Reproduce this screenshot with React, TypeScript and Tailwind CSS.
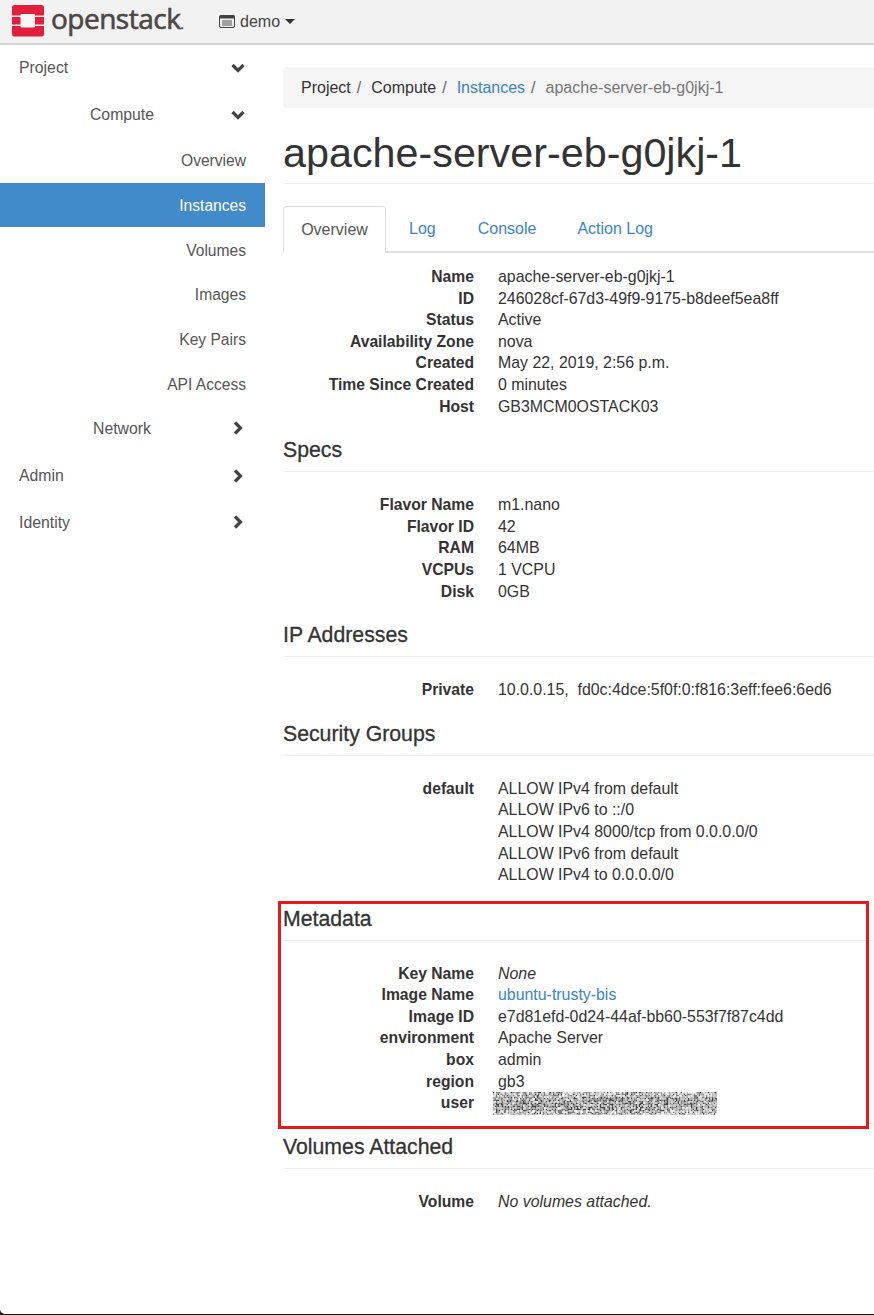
import React from 'react';

const font = "[font-family:'Liberation_Sans',Arial,sans-serif]";

type Row = [string, React.ReactNode];

function Rows({ rows }: { rows: Row[] }) {
	return (
		<dl className="grid grid-cols-[191px_1fr] gap-x-6 text-[15.9px] leading-[21.6px]">
			{rows.map(([label, value], i) => (
				<React.Fragment key={i}>
					<dt className="text-right text-[15.7px] font-bold text-[#333]">{label}</dt>
					<dd className="text-[#333] whitespace-pre">{value}</dd>
				</React.Fragment>
			))}
		</dl>
	);
}

function Section({ title, rows, children }: { title: string; rows?: Row[]; children?: React.ReactNode }) {
	return (
		<section className="relative mt-5">
			<h3 className="border-b border-[#eee] pb-2 mb-[22px] text-[21.25px] leading-[26px] font-normal text-[#333] [-webkit-text-stroke:0.3px_#333]">{title}</h3>
			{rows && <Rows rows={rows} />}
			{children}
		</section>
	);
}

function Chevron({ dir }: { dir: 'down' | 'right' }) {
	return (
		<svg width="14" height="14" viewBox="0 0 14 14" fill="none" stroke="#444" strokeWidth="3.2" className="shrink-0">
			{dir === 'down' ? <path d="M1.5 4 7 9.5 12.5 4" /> : <path d="M4 1.5 9.5 7 4 12.5" />}
		</svg>
	);
}

function Group({ label, dir, nested, raised }: { label: string; dir: 'down' | 'right'; nested?: boolean; raised?: boolean }) {
	return (
		<div className={raised
			? 'flex h-[46.5px] items-center pb-[2px] text-[15.8px] text-[#555]'
			: 'flex h-[46.5px] items-center text-[15.8px] text-[#555]'}>
			{nested ? (
				<span className="w-[208px] ml-[18px] text-center">{label}</span>
			) : (
				<span className="w-[208px] ml-[19px] -mr-px">{label}</span>
			)}
			<span className="ml-[5px]"><Chevron dir={dir} /></span>
		</div>
	);
}

function SideItem({ label, active }: { label: string; active?: boolean }) {
	return (
		<div className={active
			? 'flex h-[44.7px] items-center justify-end pt-[1px] pr-[19px] text-[15.6px] bg-[#428bca] text-white'
			: 'flex h-[44.7px] items-center justify-end pt-[1px] pr-[19px] text-[15.6px] text-[#555]'}>
			{label}
		</div>
	);
}

// redacted text block: seeded grey speckle over a darker band
function Noise() {
	const w = 224;
	const h = 23;
	const cell = 1.5;
	const levels = ['#444', '#808080', '#aaa', '#ccc', '#f0f0f0'];
	const paths: string[] = levels.map(() => '');
	let seed = 1337;
	const rnd = () => {
		seed = (seed * 16807) % 2147483647;
		return seed / 2147483647;
	};
	for (let y = 0; y < h; y += cell) {
		for (let x = 0; x < w; x += cell) {
			const band = Math.abs(y - h / 2) < 6 ? 0.14 : 0;
			const idx = Math.min(4, Math.max(0, Math.floor((rnd() + 0.12 - band) * 4.4)));
			paths[idx] += `M${x} ${y}h${cell}v${cell}h-${cell}z`;
		}
	}
	return (
		<svg width={w} height={h} viewBox={`0 0 ${w} ${h}`} className="block">
			{paths.map((d, i) => <path key={i} d={d} fill={levels[i]} />)}
		</svg>
	);
}

export default function App() {
	return (
		<div className={`${font} w-[874px] h-[1315px] overflow-hidden bg-[#1c1c1c] pb-px text-[#333]`}>
			<div className="h-full overflow-hidden rounded-bl-[5px] bg-white">
				<header className="flex h-[45px] items-center border-b-2 border-[#d4d4d4] bg-[#f2f2f2]">
					<svg width="32" height="32" viewBox="0 0 32 32" className="ml-3 -mt-0.5 shrink-0">
						<rect width="32" height="31.5" rx="2.5" fill="#e01f3d" />
						<rect x="8.5" y="9" width="14.5" height="13.5" rx="1" fill="#f7f7f7" />
						<rect x="0" y="10.5" width="9" height="1.5" fill="#fbe4e7" />
						<rect x="0" y="19.5" width="9" height="1.5" fill="#fbe4e7" />
						<rect x="23" y="10.5" width="9" height="1.5" fill="#fbe4e7" />
						<rect x="23" y="19.5" width="9" height="1.5" fill="#fbe4e7" />
					</svg>
					<span className="ml-[7px] -mt-2 w-[137px] whitespace-nowrap text-[28px] leading-none tracking-[-0.5px] text-[#4b4745] [-webkit-text-stroke:0.6px_#4b4745] [font-family:'Open_Sans',sans-serif]">openstack<span className="text-[12px]">.</span></span>
					<svg width="16" height="13" viewBox="0 0 16 13" className="ml-[31px] shrink-0">
						<rect x="0.5" y="0.5" width="15" height="12" rx="1.5" fill="#eee" stroke="#444" />
						<rect x="0.5" y="0.5" width="15" height="3" fill="#444" />
						<path d="M3 6h10M3 8h10M3 10h10" stroke="#555" />
					</svg>
					<span className="ml-[5px] text-[16px] text-[#444]">demo</span>
					<span className="ml-[5px] h-0 w-0 border-x-[5px] border-t-[5px] border-x-transparent border-t-[#333]" />
				</header>
				<div className="flex">
					<nav className="w-[265px] shrink-0">
						<Group label="Project" dir="down" />
						<Group label="Compute" dir="down" nested />
						<SideItem label="Overview" />
						<SideItem label="Instances" active />
						<SideItem label="Volumes" />
						<SideItem label="Images" />
						<SideItem label="Key Pairs" />
						<SideItem label="API Access" />
						<Group label="Network" dir="right" nested raised />
						<Group label="Admin" dir="right" />
						<Group label="Identity" dir="right" />
					</nav>
					<main className="ml-[18px] w-[620px] shrink-0">
						<div className="mt-[22px] flex h-[41px] items-center rounded bg-[#f5f5f5] pl-[18px] text-[16px]">
							<span>Project</span>
							<span className="ml-[6px] mr-[10px] text-[#666]">/</span>
							<span>Compute</span>
							<span className="ml-[6px] mr-[10px] text-[#666]">/</span>
							<span className="text-[#3b84c6]">Instances</span>
							<span className="ml-[6px] mr-[10px] text-[#666]">/</span>
							<span className="text-[#777]">apache-server-eb-g0jkj-1</span>
						</div>
						<h1 className="mt-[22px] border-b border-[#eee] pb-[7px] text-[41.3px] leading-[46px] font-normal">apache-server-eb-g0jkj-1</h1>
						<div className="mt-[22px] mb-[13px] flex h-[47px] border-b-2 border-[#ddd] text-[16px] text-[#3b84c6]">
							<span className="-mb-[2px] flex h-[47px] w-[103px] items-center justify-center rounded-t border border-b-0 border-[#ddd] bg-white text-[#555]">Overview</span>
							<span className="ml-[23px] flex items-center">Log</span>
							<span className="ml-[42px] flex items-center">Console</span>
							<span className="ml-[41px] flex items-center">Action Log</span>
						</div>
						<Rows rows={[
							['Name', 'apache-server-eb-g0jkj-1'],
							['ID', '246028cf-67d3-49f9-9175-b8deef5ea8ff'],
							['Status', 'Active'],
							['Availability Zone', 'nova'],
							['Created', 'May 22, 2019, 2:56 p.m.'],
							['Time Since Created', '0 minutes'],
							['Host', 'GB3MCM0OSTACK03'],
						]} />
						<Section title="Specs" rows={[
							['Flavor Name', 'm1.nano'],
							['Flavor ID', '42'],
							['RAM', '64MB'],
							['VCPUs', '1 VCPU'],
							['Disk', '0GB'],
						]} />
						<Section title="IP Addresses" rows={[
							['Private', '10.0.0.15,  fd0c:4dce:5f0f:0:f816:3eff:fee6:6ed6'],
						]} />
						<Section title="Security Groups" rows={[
							['default', 'ALLOW IPv4 from default'],
							['', 'ALLOW IPv6 to ::/0'],
							['', 'ALLOW IPv4 8000/tcp from 0.0.0.0/0'],
							['', 'ALLOW IPv6 from default'],
							['', 'ALLOW IPv4 to 0.0.0.0/0'],
						]} />
						<Section title="Metadata" rows={[
							['Key Name', <em>None</em>],
							['Image Name', <span className="text-[#3b84c6]">ubuntu-trusty-bis</span>],
							['Image ID', 'e7d81efd-0d24-44af-bb60-553f7f87c4dd'],
							['environment', 'Apache Server'],
							['box', 'admin'],
							['region', 'gb3'],
							['user', ''],
						]}>
							<div className="absolute left-[210px] top-[186px]"><Noise /></div>
							<div className="absolute -left-[5px] -top-[5px] h-[228px] w-[591px] border-[3px] border-[#e5191c]" />
						</Section>
						<Section title="Volumes Attached" rows={[
							['Volume', <em>No volumes attached.</em>],
						]} />
					</main>
				</div>
			</div>
		</div>
	);
}
